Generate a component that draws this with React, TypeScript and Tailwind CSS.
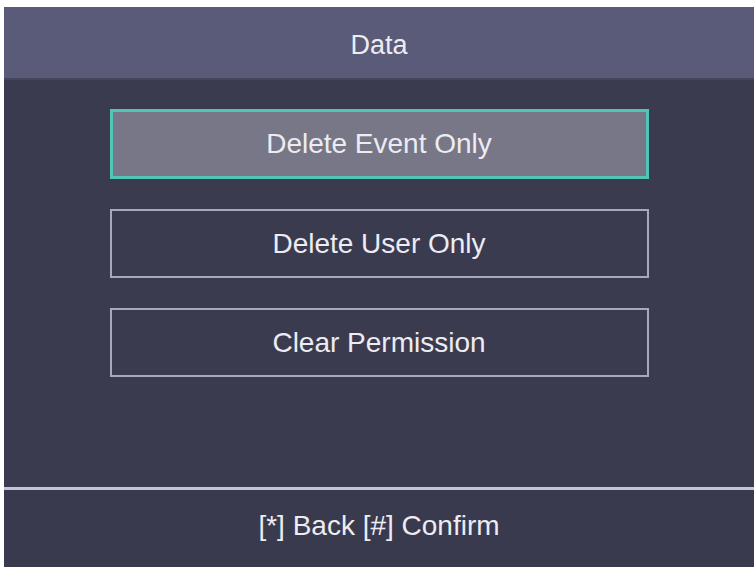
const options = [
  { label: "Delete Event Only", active: true },
  { label: "Delete User Only", active: false },
  { label: "Clear Permission", active: false },
];

function MenuButton({ label, active }: { label: string; active: boolean }) {
  return (
    <div
      className={
        active
          ? "h-[70px] w-[539px] flex items-center justify-center border-[3px] border-[#52c6b6] bg-[#787787]"
          : "h-[69px] w-[539px] flex items-center justify-center border-2 border-[#a9a9b9] bg-[#3b3b50]"
      }
    >
      <span className="text-[28px] leading-none text-[#ececf2]">{label}</span>
    </div>
  );
}

export default function App() {
  return (
    <div className="w-[754px] h-[567px] bg-white pt-[7px] pl-[4px] overflow-hidden font-['Liberation_Sans',Arial,sans-serif]">
      <div className="w-[750px] h-[560px] flex flex-col bg-[#3b3b50]">
        {/* title bar */}
        <div className="h-[73px] flex items-center justify-center bg-[#5a5b78] border-b-2 border-[#46455c]">
          <span className="text-[27px] leading-none text-[#ececf2] pt-[6px]">Data</span>
        </div>

        {/* option list */}
        <div className="flex-1 flex flex-col items-center gap-[30px] pt-[29px]">
          {options.map((o) => (
            <MenuButton key={o.label} label={o.label} active={o.active} />
          ))}
        </div>

        {/* key hints */}
        <div className="h-[3px] bg-[#c4c4d4]" />
        <div className="h-[77px] flex items-center justify-center bg-[#3a3a4f]">
          <span className="text-[28px] leading-none text-[#ececf2] pb-[6px]">[*] Back [#] Confirm</span>
        </div>
      </div>
    </div>
  );
}
